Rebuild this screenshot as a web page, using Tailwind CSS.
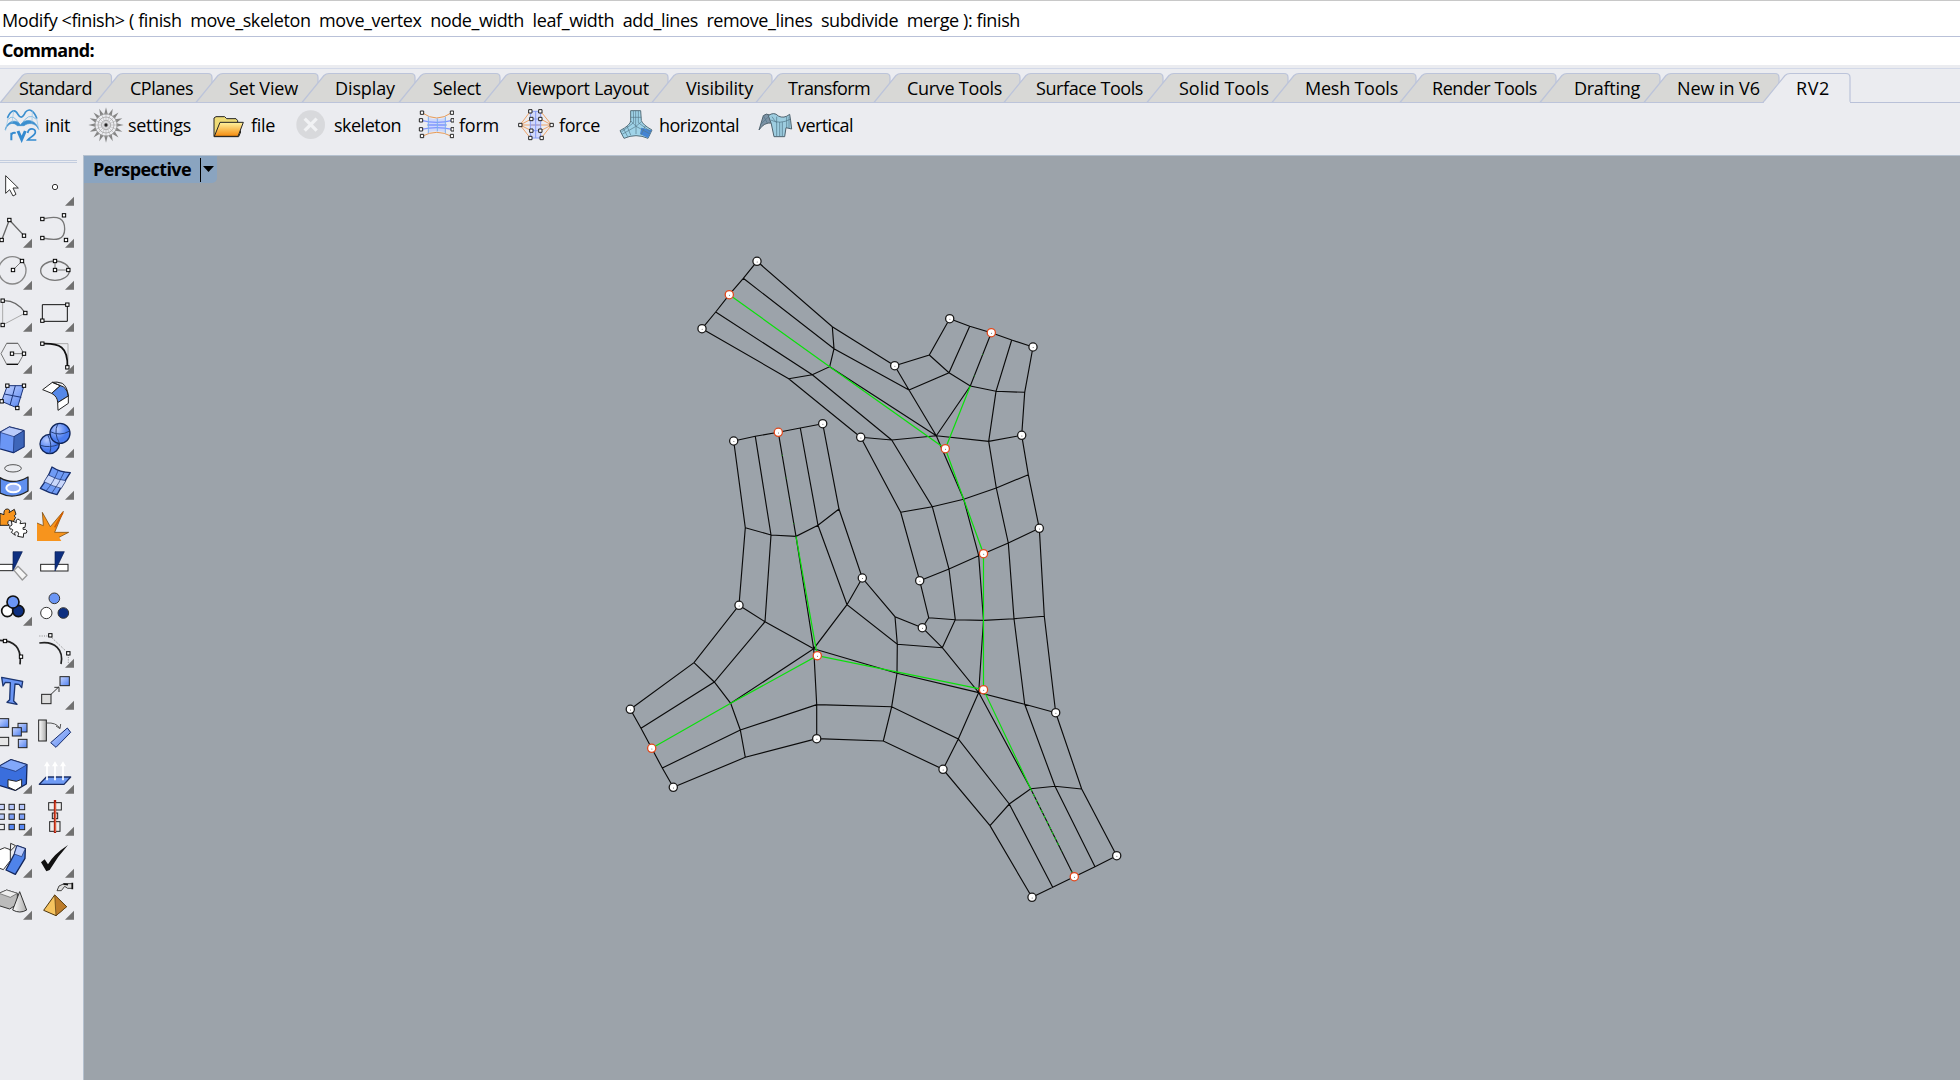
<!DOCTYPE html>
<html lang="en">
<head>
<meta charset="utf-8">
<title>Rhino - RV2</title>
<script src="https://cdn.jsdelivr.net/npm/@tailwindcss/browser@4"></script>
</head>
<body class="w-[1960px] h-[1080px] overflow-hidden bg-[#ebecf0] text-black font-['Open_Sans','Noto_Sans',sans-serif] text-[18px] flex flex-col">

<!-- command history and prompt -->
<header class="shrink-0 bg-white border-t border-[#c8c8c8] h-[65px]">
  <div class="h-[36px] border-b border-[#b9c1d8] leading-[35px] pt-[2px] pl-[2px] whitespace-pre"><span class="inline-block" data-fit="1018">Modify &lt;finish&gt; ( finish  move_skeleton  move_vertex  node_width  leaf_width  add_lines  remove_lines  subdivide  merge ): finish</span></div>
  <div class="h-[28px] leading-[27px] pl-[2px] font-bold"><span class="inline-block" data-fit="92">Command:</span></div>
</header>

<!-- toolbar tabs -->
<nav id="tabs" class="shrink-0 relative h-[38px] border-t-0 border-b border-[#b9c1d8] flex pt-[8px]"></nav>

<!-- RV2 toolbar -->
<section class="shrink-0 h-[52px] pl-[4px] flex items-start pt-[4px] leading-[36px]">
  <div class="flex w-[84px]">
    <svg class="w-9 h-9" viewBox="12 321 108 108" fill="none" stroke-linecap="round">
      <path d="M23 352C32 332 45 325 53 342C62 357 68 353 76 337C88 322 102 333 110 354" stroke="#3b8fcf" stroke-width="5"/>
      <path d="M26 357Q39 338 62 377Q86 333 108 357" stroke="#8abfe4" stroke-width="3"/>
      <path d="M16 388C22 360 52 356 61 376C75 353 107 358 116 388C105 366 84 368 72 377H52C42 367 26 366 16 388Z" fill="#3b8fcf" stroke="#3b8fcf" stroke-width="2"/>
      <path d="M24 355L17 391M110 356L116 389M41 333L36 368M97 332L96 366" stroke="#93c4e6" stroke-width="2"/>
      <g stroke="#338ad0" stroke-width="6" stroke-linecap="butt"><path d="M34 421V398M34 405Q36 397 47 399"/><path d="M54 393L65 418L76 393" stroke-width="9"/><path d="M83 399C86 381 108 384 106 398C105 407 90 411 83 420H109" stroke-width="5"/></g>
    </svg>
    <span class="inline-block ml-[5px]" data-fit="25">init</span>
  </div>
  <div class="flex w-[124px]">
    <svg id="gear" class="w-9 h-9" viewBox="264 321 108 108"></svg>
    <span class="inline-block ml-[4px]" data-fit="63">settings</span>
  </div>
  <div class="flex w-[81px]">
    <svg class="w-9 h-9" viewBox="636 321 108 108" stroke="#222" stroke-width="3" stroke-linejoin="round">
      <defs><linearGradient id="fo" x1="0" y1="0" x2="0" y2="1"><stop stop-color="#fff4a0"/><stop offset="1" stop-color="#f58a0c"/></linearGradient></defs>
      <path d="M642 410V354L648 350H674L680 356H708L713 362V372L722 396L716 410Z" fill="#eedb76"/>
      <path d="M643 409L660 367H730L714 409Z" fill="url(#fo)"/>
    </svg>
    <span class="inline-block ml-[3px]" data-fit="24">file</span>
  </div>
  <div class="flex w-[125px]">
    <svg class="w-9 h-9" viewBox="879 321 108 108"><circle cx="932" cy="374" r="43" fill="#d8d9dc"/><path d="M914 356L950 392M950 356L914 392" stroke="#f1f2f4" stroke-width="10"/></svg>
    <span class="inline-block ml-[5px]" data-fit="67">skeleton</span>
  </div>
  <div class="flex w-[100px]">
    <svg class="w-9 h-9" viewBox="1254 321 108 108" fill="none" stroke-width="3">
      <path d="M1284 353Q1312 360 1337 353V397Q1312 390 1284 397Z" fill="#cdd8fb"/>
      <path d="M1266 338Q1310 370 1355 338M1266 409Q1310 385 1355 409" stroke="#e89a55"/>
      <path d="M1264 361Q1310 373 1357 361M1264 388Q1310 378 1357 388M1282 375H1340" stroke="#7f95ff" stroke-width="4"/>
      <path d="M1285 350V400M1312 355V394M1336 350V400" stroke="#7fb0ee"/>
      <g fill="#fff" stroke="#222"><path d="M1261 333h10v10h-10zM1351 333h10v10h-10zM1258 356h10v10h-10zM1353 356h9v10h-9zM1258 383h10v10h-10zM1353 383h9v10h-9zM1261 403h10v10h-10zM1351 403h10v10h-10z"/></g>
    </svg>
    <span class="inline-block ml-[5px]" data-fit="40">form</span>
  </div>
  <div class="flex w-[100px]">
    <svg class="w-9 h-9" viewBox="114 321 108 108" fill="none" stroke-width="3">
      <path d="M151 334H182V414H151Z" fill="#d2d9fb"/>
      <path d="M120 375L151 334M120 375L154 357M120 375H215M120 375L154 392M120 375L151 414M215 375L182 334M215 375L182 357M215 375L182 392M215 375L184 414" stroke="#eea469"/>
      <path d="M151 334V414M182 334V414M167 334V414M151 334H182M151 357H182M151 375H182M151 392H182M151 414H182" stroke="#879cf5"/>
      <g fill="#fff" stroke="#222"><path d="M146 329h10v10h-10zM176 329h10v10h-10zM149 352h10v10h-10zM176 352h10v10h-10zM116 370h10v10h-10zM210 370h10v10h-10zM149 387h10v10h-10zM176 387h10v10h-10zM146 409h10v10h-10zM180 409h10v10h-10z"/></g>
    </svg>
    <span class="inline-block ml-[5px]" data-fit="41">force</span>
  </div>
  <div class="flex w-[140px]">
    <svg class="w-9 h-9" viewBox="414 321 108 108" stroke-width="2" stroke-linejoin="round">
      <path d="M452 332H482L484 362Q489 375 516 390L504 415Q468 399 432 415L420 392Q452 375 452 362Z" fill="#9fd3e8" stroke="#56707c" stroke-width="3"/>
      <path d="M484 383L515 391L504 414L480 402Z" fill="#4384d4"/>
      <path d="M467 332V378M453 352H484M452 362L468 379L484 365M468 379L426 403M468 379L510 402M468 379V402M441 378L452 405M496 377L483 405M430 385L443 410M460 333L461 368L424 396M475 333V368L513 396" stroke="#56788a" fill="none"/>
    </svg>
    <span class="inline-block ml-[5px]" data-fit="80">horizontal</span>
  </div>
  <div class="flex">
    <svg class="w-9 h-9" viewBox="834 321 108 108" stroke="#4f626e" stroke-width="3" stroke-linejoin="round">
      <path d="M837 390L850 347Q858 338 871 346L876 369Q852 366 837 390Z" fill="#7d93a6"/>
      <path d="M865 347Q882 334 895 348Q912 357 929 343Q932 360 935 387L918 383L914 410H882L874 372Z" fill="#9dcde0"/>
      <path d="M872 360Q900 374 930 358M890 350V408M899 366V408M907 366V408M876 350Q882 360 890 368M843 372L866 350M920 351V383M927 350V384M850 347L862 369" fill="none" stroke="#4e7285" stroke-width="2"/>
    </svg>
    <span class="inline-block ml-[3px]" data-fit="56">vertical</span>
  </div>
</section>

<main class="flex flex-1 min-h-0">
  <!-- tool palette -->
  <aside class="w-[83px] shrink-0 overflow-hidden pt-[5px]">
    <div class="w-[77px] h-[3px] border-y border-[#c3cddf]"></div>
    <div id="tools" class="grid grid-cols-[42px_42px] auto-rows-[42px] -ml-2 pt-[3px]"></div>
  </aside>

  <!-- viewport -->
  <div class="flex-1 border-l border-t border-[#b5c1cf] bg-[#9ca3aa] relative">
    <svg id="mesh" class="block w-[1876px] h-[924px]" viewBox="84 156 1876 924"></svg>
    <div class="absolute left-0 top-0 w-[133px] h-[27px] bg-[#8aa4c0] rounded-br-[5px] font-bold pl-[9px]">
      <span class="inline-block leading-[26px]" data-fit="98">Perspective</span>
      <svg class="absolute left-[116px] top-[2px] w-4 h-6" viewBox="0 0 16 24"><path d="M.5 0V24" stroke="#000"/><path d="M3 8H14L8.500 14Z"/></svg>
    </div>
  </div>
</main>

<script>
// [label, label left edge, label width, tab right edge]
const tabs = [['Standard',19,73,111.5],['CPlanes',130,63,211.5],['Set View',229,69,317.5],['Display',335,60,414.5],['Select',433,48,499.5],['Viewport Layout',517,132,667.5],['Visibility',686,67,771.5],['Transform',788,82,889.5],['Curve Tools',907,95,1019.5],['Surface Tools',1036,107,1162.5],['Solid Tools',1179,90,1287.5],['Mesh Tools',1305,93,1415.5],['Render Tools',1432,105,1555.5],['Drafting',1574,66,1659.5],['New in V6',1677,83,1778.5],['RV2',1796,34,1849.5]];
let prev = 16.5, x0 = 0;
document.getElementById('tabs').innerHTML = '<div class="absolute inset-x-0 top-[3px] h-px bg-[#d3d9e8]"></div>' + tabs.map(([t, l, w, r], i) => {
  const a = prev - x0, e = r - x0, on = t === 'RV2';
  const s = `M${a-16} 29.500L${a+6} 2.500Q${a+8} .500 ${a+11} .500H${e-4}Q${e} .500 ${e} 4.500V29.500`;
  const html = `<div class="relative h-[30px] shrink-0" style="width:${r-x0}px"><svg class="absolute left-0 top-0 overflow-visible w-full h-[30px]"><path d="${s}Z" fill="${on ? '#ebecf0' : '#d8d8d6'}"/><path d="${s}" fill="none" stroke="#bcc4da" stroke-width="1.200"/>${on ? `<path d="M${a-15} 29.500H${e}" stroke="#ebecf0" stroke-width="1.500"/>` : `<path d="M${a-16} 29.500H${e}" stroke="#bcc4da"/>`}</svg><span class="relative inline-block whitespace-pre leading-[31px]" style="margin-left:${l-x0}px" data-fit="${w}">${t}</span></div>`;
  prev = r; x0 = r; return html;
}).join('');

// spoked settings wheel
let g = '';
for (let k = 0; k < 16; k++) {
  const a = k*Math.PI/8, p = (r, d) => (318+r*Math.cos(a+d)).toFixed(1)+' '+(375+r*Math.sin(a+d)).toFixed(1);
  g += `<path d="M${p(32,-.17)}L${p(53,0)}L${p(32,.17)}Z" fill="#858585"/><path d="M${p(4,0)}L${p(33,0)}" stroke="#aaa" stroke-width="1.500"/>`;
}
document.getElementById('gear').innerHTML = g + '<g fill="none" stroke="#999" stroke-width="2"><circle cx="318" cy="375" r="34"/><circle cx="318" cy="375" r="24"/><circle cx="318" cy="375" r="14"/></g><circle cx="318" cy="375" r="5" fill="#222"/>';

// palette icons: [viewBox y, has flyout, drawing]; even entries are the left column
const sq = (...p) => { let s=''; for (let i=0;i<p.length;i+=2) s += `<rect x="${p[i]-5}" y="${p[i+1]-5}" width="10" height="10" fill="#fff" stroke="#000" stroke-width="3"/>`; return s; };
const ln = (d, c='#777', w=3, f='none') => `<path d="${d}" stroke="${c}" stroke-width="${w}" fill="${f}" stroke-linejoin="round"/>`;
const box = (x,y,w,h,f,c='#222') => `<rect x="${x}" y="${y}" width="${w}" height="${h}" fill="${f}" stroke="${c}" stroke-width="3"/>`;
const B = '#6b96f5', L = '#b9cbfb', N = '#0d2f80';
const defs = `<defs><linearGradient id="bl" x1="0" y1="0" x2="1" y2="1"><stop stop-color="#c8d6ff"/><stop offset="1" stop-color="#4f80f0"/></linearGradient><linearGradient id="gr"><stop stop-color="#fff"/><stop offset="1" stop-color="#aaa"/></linearGradient><radialGradient id="sp" cx=".35" cy=".3"><stop stop-color="#b7cbff"/><stop offset="1" stop-color="#4a7cf0"/></radialGradient></defs>`;
const icons = [
 [48,0, ln('M17 77V130L29 119L39 138L48 133L39 114H55Z','#333',3,'#fff')],
 [48,1, '<circle cx="165" cy="111" r="8" fill="#fff" stroke="#333" stroke-width="3"/>'],
 [174,1, ln('M5 270L28 210L72 257','#666',4)+sq(5,270,28,210,72,257)],
 [174,1, ln('M127 207C178 194 194 207 194 237C194 270 170 273 127 264','#777',4)+sq(127,207,192,196,127,264,198,270)],
 [300,1, '<circle cx="37" cy="361" r="41" fill="none" stroke="#888" stroke-width="4"/>'+ln('M39 360L66 333')+sq(39,360,66,333)],
 [300,1, '<ellipse cx="165" cy="362" rx="43" ry="29" fill="none" stroke="#777" stroke-width="4"/>'+ln('M165 333V360H205')+sq(165,333,165,360,205,360)],
 [426,1, ln('M8 452V525L76 489','#aaa')+ln('M8 452Q50 450 76 489','#666',4)+sq(8,452,8,525,76,489)],
 [426,1, ln('M127 464H202V514H127Z','#111',3)+sq(202,464,127,512)],
 [-18,1, ln('M20 10H54L72 41L54 73H20L3 41Z','#777',3)+ln('M20 10H54','#555',2)+ln('M20 73H54','#111',4)+ln('M36 41H72')+sq(36,41,72,41)],
 [-18,1, ln('M127 11H204V82','#aaa')+ln('M127 11C178 9 205 20 202 82','#111',5)+sq(127,11,202,82)],
 [108,1, ln('M22 137H72L52 204L5 184Z','#1b3478',3,'url(#bl)')+ln('M46 137L30 196M13 162L64 172','#1b3478')+sq(22,137,72,137,52,204,5,184)],
 [108,1, ln('M157 127L128 149L155 160L181 137Z','#222',3,'#fff')+ln('M181 137Q200 140 205 168L173 188Q173 170 155 160Z','#222',3,'#5588e8')+ln('M205 168V190L174 211L173 188Z','#222',3,'#fff')+ln('M181 137L157 127Q170 124 187 130Q202 140 205 168','#222',3)],
 [234,1, ln('M0 277L28 261L72 272V320L40 338L-2 326Z','#142b6c',4,B)+ln('M0 277L28 261L72 272L42 290Z','#142b6c',2,L)+ln('M42 290L72 272V320L40 338Z','#142b6c',2,'#3e66b9')],
 [234,1, '<circle cx="149" cy="312" r="29" fill="url(#sp)" stroke="#102558" stroke-width="4"/>'+ln('M143 284Q158 312 149 341M121 316Q148 325 177 313','#26427f')+'<circle cx="180" cy="280" r="30" fill="url(#sp)" stroke="#102558" stroke-width="4"/>'+ln('M173 252Q160 280 179 310M151 275Q180 290 209 273','#26427f')],
 [360,1, '<ellipse cx="39" cy="385" rx="25" ry="11" fill="none" stroke="#555" stroke-width="3"/>'+ln('M0 413Q40 437 84 411V453Q40 480 0 459Z','#222',4,'#5f8fef')+'<ellipse cx="40" cy="444" rx="21" ry="13" fill="#9db7f8" stroke="#fff" stroke-width="6"/>'],
 [360,1, ln('M156 381Q180 397 211 398Q193 425 171 464Q148 459 121 445Q142 418 156 381Z','#172e6b',4,'#6f9bf5')+ln('M145 405Q172 420 198 422L184 445Q160 440 132 425Z','#172e6b',2,'#c9d7fb')+ln('M175 390Q160 428 138 453M193 395Q178 430 155 460','#172e6b',2)],
 [486,0, `<g stroke="#222" stroke-width="3" stroke-linejoin="round"><path fill="#f7941d" d="M0 520L12 524Q10 507 22 507Q32 508 27 518L43 508L48 523Q38 528 47 532L38 548Q28 536 24 545Q21 551 28 556L0 556Z"/><path fill="#fff" d="M34 542L49 548Q46 536 57 538Q66 543 60 551L77 549L75 562Q67 560 69 568Q78 566 81 573Q82 582 71 580L70 592L53 589Q60 577 50 575Q40 576 46 586L34 577Q44 566 30 567Q24 559 36 555Z"/></g>`],
 [486,0, ln('M111 603V549L130 557L127 517L151 560L190 514L164 577L206 577L177 592L184 603Z','none',0,'#f7941d')+ln('M111 549L130 557L127 517L151 560L190 514L164 577L206 577L177 592','#6a3b00',2)+ln('M189 517L164 562','#d15e00',5)],
 [42,0, box(-4,103,43,19,'#fff')+ln('M39 65H67L39 123Z','#0a1f55',2,N)+ln('M42 121L54 109L81 136L67 150Z','#999',4,'#f5f5f5')],
 [42,0, box(122,103,82,20,'#fff')+ln('M165 65H193L165 123Z','#0a1f55',2,N)],
 [168,1, '<g stroke="#111" stroke-width="5"><circle cx="22" cy="243" r="17" fill="#fff"/><circle cx="55" cy="243" r="17" fill="#0d2f80"/><circle cx="39" cy="216" r="18" fill="#6b96f5"/></g>'],
 [168,0, '<g stroke="#333" stroke-width="3"><circle cx="163" cy="205" r="16" fill="#6b96f5"/><circle cx="139" cy="249" r="17" fill="#fff"/><circle cx="190" cy="249" r="16" fill="#0d2f80"/></g>'],
 [294,0, ln('M-3 331Q68 330 60 403','#222',5)+sq(15,333,63,380)],
 [294,1, ln('M118 339C165 332 192 360 183 402','#222',5)+'<path d="M118 318H150L205 370V402" fill="none" stroke="#888" stroke-width="3" stroke-dasharray="3 4"/>'+sq(151,316,205,370)],
 [420,0, ln('M5 442L68 454L65 473L57 463L45 462L41 513L51 523L21 517L29 509L31 458L16 457L9 468Z','#1c356f',4,B)],
 [420,1, box(125,493,28,28,'#ddd')+box(180,440,28,27,'url(#bl)')+ln('M153 493L176 471M163 472H177V486','#333',3)],
 [-24,0, box(-2,-4,28,26,'url(#bl)')+box(54,10,27,26,'url(#bl)')+box(37,23,27,25,'url(#bl)')+box(-2,52,28,25,'#e6e6e6')+box(55,58,26,25,'url(#bl)')],
 [-24,0, box(116,0,23,63,'url(#gr)')+ln('M140 9Q168 7 179 24M168 18L180 26L182 12','#555',3)+ln('M202 24L212 37L168 82L152 68Z','#142b6c',3,'url(#bl)')],
 [102,1, ln('M-3 139L33 119L81 134L79 192L46 211L-3 196Z','#13265c',4,'#3a6edd')+ln('M-3 139L33 119L81 134L47 154Z','#13265c',2,'#82a8fa')+ln('M24 179L49 184L65 178V199L46 211L24 201Z','#222',3,'#fff')],
 [102,1, ln('M139 171H212L192 193H118Z','#1b2f66',4,'#6f9bf5')+ln('M141 181V134M165 181V134M189 181V134','#fff',5)+'<path d="M132 139L141 124L150 139ZM156 139L165 124L174 139ZM180 139L189 124L198 139Z" fill="#fff"/>'],
 [228,1, [[-3,'#c9d4fb'],[27,'#b4c5fb'],[58,'#b4c5fb']].map(([x,c],i)=>box(x,253,16,16,c)+box(x,282,16,16,i?'#7ea0f8':L)+box(x,313,16,16,i?'#5b8af5':'#eee')).join('')],
 [228,1, box(146,248,38,22,'#f1f1f1')+box(157,279,16,17,'#ddd')+box(149,305,31,29,'#eee')+'<path d="M165 240V339" stroke="#a51c0c" stroke-width="7"/><path d="M166 248V336" stroke="#f0714e" stroke-width="3"/>'],
 [354,1, ln('M-3 390L14 383L31 389V422L10 449L-3 444Z','#333',3,'#fff')+ln('M32 370L47 377L31 393Z','#333',3,'#eee')+ln('M51 377L76 386L75 415L46 463L18 450L43 402Z','#12265c',4,'#4f83ea')+ln('M51 377L76 386Q70 398 65 410L43 402Z','#12265c',2,L)],
 [354,1, '<path d="M123 427L134 418L144 433Q160 404 204 375Q173 409 149 450L139 454Z" fill="#111"/>'],
 [480,1, ln('M-3 520L20 510L52 520V552L29 567L-3 557Z','#333',3,'#bbb')+ln('M-3 520L20 510L52 520L31 532Z','#555',2,'#eee')+ln('M59 515L80 570Q60 582 38 570Z','#333',3,'url(#gr)')],
 [480,1, ln('M164 525L131 571L168 587L200 560Z','#4d360f',3,'#f6c45f')+ln('M164 525L168 587L200 560Z','#4d360f',2,'#bd7c2a')+ln('M217 491V505H203L194 499L184 512H171L177 498L192 491Z','#444',3,'#ddd')+ln('M217 488V508M190 492L204 494','#111',5)]
];
document.getElementById('tools').innerHTML = icons.map(([y, fly, d], i) => {
  const x = i%2 ? 102 : -24;
  return `<svg class="w-[42px] h-[42px] overflow-visible" viewBox="${x} ${y} 126 126">${i ? '' : defs}${d}${fly ? `<path d="M${x+120} ${y+92}V${y+119}H${x+93}Z" fill="#717171"/>` : ''}</svg>`;
}).join('');

// mesh vertices
const V = {A1:[757,261.3],A2:[743.3,278.3],A3:[729.3,294.7],A4:[715.7,312],A5:[702,328.7],B1:[832.3,326.7],B2:[834,348.7],B3:[829.7,366.7],B4:[812.3,374.7],B5:[788.7,378.7],C1:[894.7,365.7],C2:[909,390],C3:[936.3,435.7],C4:[891.7,440],C5:[860.7,437.3],E1:[949.7,318.7],E2:[969.7,326.3],E3:[991.3,332.7],E4:[1011.7,340],E5:[1033,347],F1:[929.3,355],F2:[949,372.7],F3:[970.3,386],F4:[996,391.3],F5:[1024.7,392.3],G4:[988.7,441.3],G5:[1021.7,435.3],S1:[945.3,448.7],H1:[900.7,512.3],H2:[932.3,506.7],H3:[963.7,499.3],H4:[996.3,488],H5:[1028.3,474.7],I1:[919.7,580.7],I2:[949,569],I3:[978.7,555.7],I4:[1008.3,543],I5:[1039.3,528.3],J1:[928.7,617.7],J2:[955.3,619.7],J3:[983.5,620.3],J4:[1014,618.7],J5:[1044.3,616.3],K:[922.3,627.7],L:[942.3,647.7],M:[978.7,692.6],N4:[1024.7,704.3],N5:[1055.7,712.7],P:[958.3,739],Q:[943,769.3],R1:[990,825.7],R2:[1009.3,804],R3:[1030.7,788.7],R4:[1055,786.3],R5:[1081.7,789],T1:[1032,897.3],T2:[1052.7,887.3],T3:[1074.3,876.7],T4:[1095,866.7],T5:[1116.7,855.7],U1:[733.7,441],U2:[755.3,436.3],U3:[778.3,432.3],U4:[800.3,428],U5:[822.7,423.7],V1:[745.3,527.7],V2:[771,535],V3:[796,536.3],V4:[818,525.3],V5:[839,509],W1:[739,605.3],W2:[765,621.7],W3:[813.7,648.7],W4:[847,604.7],W5:[862.3,578],X1:[694,662.7],X2:[714.3,682],X3:[730.7,703.3],X4:[740.3,730],X5:[745.3,757.3],Y1:[630.3,709.3],Y2:[641,728.3],Y3:[651.7,748.3],Y4:[662.3,768],Y5:[673.3,787.3],Z1:[816.7,704.7],Z2:[816.7,738.7],a1:[895,616.7],a2:[897.3,644.3],a3:[897,673.3],a4:[891.7,706.7],a5:[883.3,741],S2:[983.5,553.7],S3:[983.5,689.7],S4:[817.3,655.7]};
const path = s => s.split(',').map(q => 'M' + q.trim().split(' ').map(k => V[k].join(' ')).join('L')).join('');
const black = 'A1 A2 A3 A4 A5,B1 B2 B3 B4 B5,A1 B1 C1,A2 B2 C2,B3 C3,A4 B4 C4,A5 B5 C5,C1 C2 C3 G4 G5,C5 C4 C3,C1 F1 E1,C2 F2 E2,C3 F3 E3,G4 F4 E4,G5 F5 E5,E1 E2 E3 E4 E5,F1 F2 F3 F4 F5,C5 H1 I1 J1 K,C4 H2 I2 J2 L,C3 H3 I3 J3 M,G4 H4 I4 J4 N4,G5 H5 I5 J5 N5,H1 H2 H3 H4 H5,I1 I2 I3 I4 I5,J1 J2 J3 J4 J5,K L M N4 N5,M P Q,M R3 T3,N4 R4 T4,N5 R5 T5,R1 R2 R3 R4 R5,T1 T2 T3 T4 T5,U1 U2 U3 U4 U5,V1 V2 V3 V4 V5,U1 V1 W1 X1 Y1,U2 V2 W2 X2 Y2,U3 V3 W3 X3,U4 V4 W4 a2 L,U5 V5 W5 a1 K,W1 W2 W3 W4 W5,X1 X2 X3 X4 X5,Y1 Y2 Y3 Y4 Y5,Y4 X4 Z1 a4 P R2 T2,Y5 X5 Z2 a5 Q R1 T1,W3 Z1 Z2,W3 a3 M,a1 a2 a3 a4 a5';
const dot = (c) => k => `<circle cx="${V[k][0]}" cy="${V[k][1]}" r="4.100" fill="#fff" stroke="${c}" stroke-width="1.300"/><circle cx="${V[k][0]+.2}" cy="${V[k][1]+.6}" r=".5" fill="#555"/>`;
document.getElementById('mesh').innerHTML =
  `<g fill="none"><path d="${path(black)}" stroke="#0a0a0a" stroke-width="1.150"/><path d="${path('E3 F3,U3 V3,R3 T3')}" stroke="#12a012" stroke-width="1" stroke-dasharray="1 22"/><path d="M1030.700 788.700L1060 848" stroke="#0be00b" stroke-dasharray="3 3"/><path d="${path('A3 B3 S1 F3,S1 H3 S2 S3 R3,Y3 X3 S4 S3,V3 S4')}" stroke="#0be00b" stroke-width="1.200"/></g>`
  + 'A1 A5 C1 C5 E1 E5 G5 I1 I5 K N5 Q T1 T5 U1 U5 W1 W5 Y1 Y5 Z2'.split(' ').map(dot('#1a1a1a')).join('')
  + 'A3 E3 S1 S2 S3 S4 T3 U3 Y3'.split(' ').map(dot('#e0481c')).join('');

// even out label tracking to each label's width, again whenever the text metrics change
const fit = el => {
  el.style.whiteSpace = 'pre';
  el.style.letterSpacing = '0px';
  const d = (el.dataset.fit - el.getBoundingClientRect().width) / el.textContent.length;
  el.style.letterSpacing = d.toFixed(3) + 'px';
};
const fitAll = () => document.querySelectorAll('[data-fit]').forEach(fit);
fitAll();
const observer = new ResizeObserver(entries => entries.forEach(e => {
  if (Math.abs(e.target.getBoundingClientRect().width - e.target.dataset.fit) > .5) fit(e.target);
}));
document.querySelectorAll('[data-fit]').forEach(el => observer.observe(el));
addEventListener('load', fitAll);
document.fonts.ready.then(fitAll);
</script>
</body>
</html>
